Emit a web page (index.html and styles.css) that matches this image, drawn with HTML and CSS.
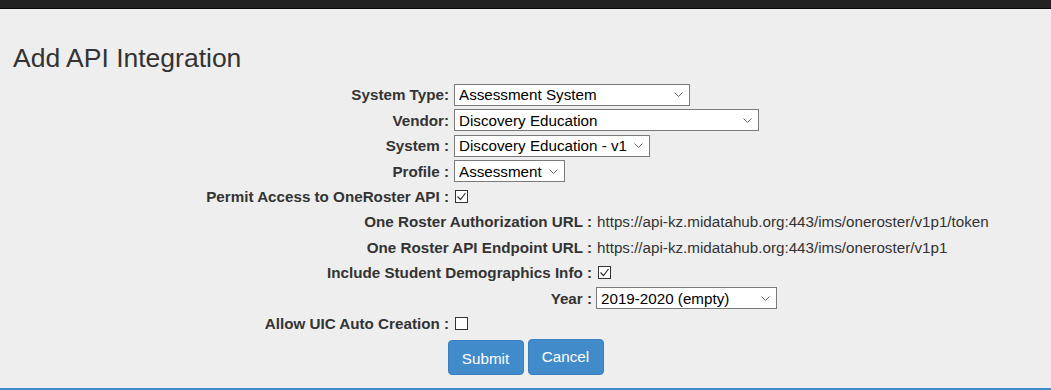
FILE: index.html
```html
<!DOCTYPE html>
<html lang="en">
<head>
    <meta charset="UTF-8">
    <meta name="viewport" content="width=device-width, initial-scale=1.0">
    <title>Add API Integration</title>
    <link rel="stylesheet" href="styles.css">
</head>
<body>
    <div class="topbar"></div>

    <main class="page">
        <h1 class="title">Add API Integration</h1>

        <form class="form">
            <div class="row">
                <label class="lbl">System Type:</label>
                <select class="sel w-type"><option>Assessment System</option></select>
            </div>
            <div class="row">
                <label class="lbl">Vendor:</label>
                <select class="sel w-vendor"><option>Discovery Education</option></select>
            </div>
            <div class="row">
                <label class="lbl">System :</label>
                <select class="sel w-system"><option>Discovery Education - v1</option></select>
            </div>
            <div class="row">
                <label class="lbl">Profile :</label>
                <select class="sel w-profile"><option>Assessment</option></select>
            </div>
            <div class="row">
                <label class="lbl">Permit Access to OneRoster API :</label>
                <span class="box checked">
                    <svg width="11" height="11" viewBox="0 0 11 11"><polyline points="1.5,5.5 4.5,8.5 9.5,2" fill="none" stroke="#333" stroke-width="1.2"/></svg>
                </span>
            </div>

            <div class="row sub">
                <span class="lbl">One Roster Authorization URL :</span>
                <span class="val">https://api-kz.midatahub.org:443/ims/oneroster/v1p1/token</span>
            </div>
            <div class="row sub">
                <span class="lbl">One Roster API Endpoint URL :</span>
                <span class="val">https://api-kz.midatahub.org:443/ims/oneroster/v1p1</span>
            </div>
            <div class="row sub">
                <label class="lbl">Include Student Demographics Info :</label>
                <span class="box checked">
                    <svg width="11" height="11" viewBox="0 0 11 11"><polyline points="1.5,5.5 4.5,8.5 9.5,2" fill="none" stroke="#333" stroke-width="1.2"/></svg>
                </span>
            </div>
            <div class="row sub">
                <label class="lbl">Year :</label>
                <select class="sel w-year"><option>2019-2020 (empty)</option></select>
            </div>

            <div class="row">
                <label class="lbl">Allow UIC Auto Creation :</label>
                <span class="box"></span>
            </div>

            <div class="actions">
                <button type="button" class="btn submit">Submit</button>
                <button type="button" class="btn cancel">Cancel</button>
            </div>
        </form>
    </main>

    <div class="footer-line"></div>
</body>
</html>
```

FILE: styles.css
```css
html, body {
    height: 100%;
}

body {
    margin: 0;
    font-family: 'Liberation Sans', Arial, sans-serif;
    font-size: 15.2px;
    color: #333;
    background: #eeeeee;
    display: flex;
    flex-direction: column;
}

.topbar {
    height: 8px;
    background: #222;
    border-bottom: 1px solid #080808;
    flex: 0 0 auto;
}

.page {
    flex: 1;
}

.title {
    margin: 34px 0 0 13px;
    font-size: 26.5px;
    font-weight: normal;
    line-height: 30px;
    color: #333;
}

.form {
    margin-top: 9px;
}

.row {
    display: flex;
    align-items: center;
    height: 25.44px;
}

.lbl {
    flex: 0 0 449px;
    margin-right: 5px;
    text-align: right;
    font-weight: bold;
    color: #333;
    white-space: nowrap;
}

.sub .lbl {
    flex-basis: 592px;
}

.val {
    color: #333;
    white-space: nowrap;
}

.sel {
    -webkit-appearance: none;
    appearance: none;
    height: 22px;
    margin: 0;
    padding: 0 20px 0 4px;
    border: 1px solid #7a7a7a;
    border-radius: 0;
    background: #fff url("data:image/svg+xml,%3Csvg xmlns='http://www.w3.org/2000/svg' width='9' height='5' viewBox='0 0 9 5'%3E%3Cpolyline points='0.5,0.5 4.5,4.5 8.5,0.5' fill='none' stroke='%23666' stroke-width='1'/%3E%3C/svg%3E") no-repeat right 6px center;
    font-family: 'Liberation Sans', Arial, sans-serif;
    font-size: 15.2px;
    color: #000;
    box-sizing: border-box;
}

.w-type { width: 236px; }
.w-vendor { width: 305px; }
.w-system { width: 196px; }
.w-profile { width: 111px; }
.w-year { width: 181px; margin-left: -1px; }

.box {
    width: 13px;
    height: 13px;
    margin-left: 1px;
    border: 1px solid #333;
    background: #fff;
    box-sizing: border-box;
    display: flex;
    align-items: center;
    justify-content: center;
}

.actions {
    display: flex;
    justify-content: center;
    align-items: flex-end;
    gap: 4px;
    height: 38.5px;
}

.btn {
    width: 76px;
    padding: 0;
    border: 1px solid #3a80c0;
    border-radius: 4px;
    background: #428bca;
    color: #fff;
    font-family: 'Liberation Sans', Arial, sans-serif;
    font-size: 15.2px;
    cursor: pointer;
}

.submit {
    height: 35px;
    padding-top: 2px;
}

.cancel {
    height: 36px;
}

.footer-line {
    flex: 0 0 auto;
    height: 2px;
    background: #428bca;
}
```
